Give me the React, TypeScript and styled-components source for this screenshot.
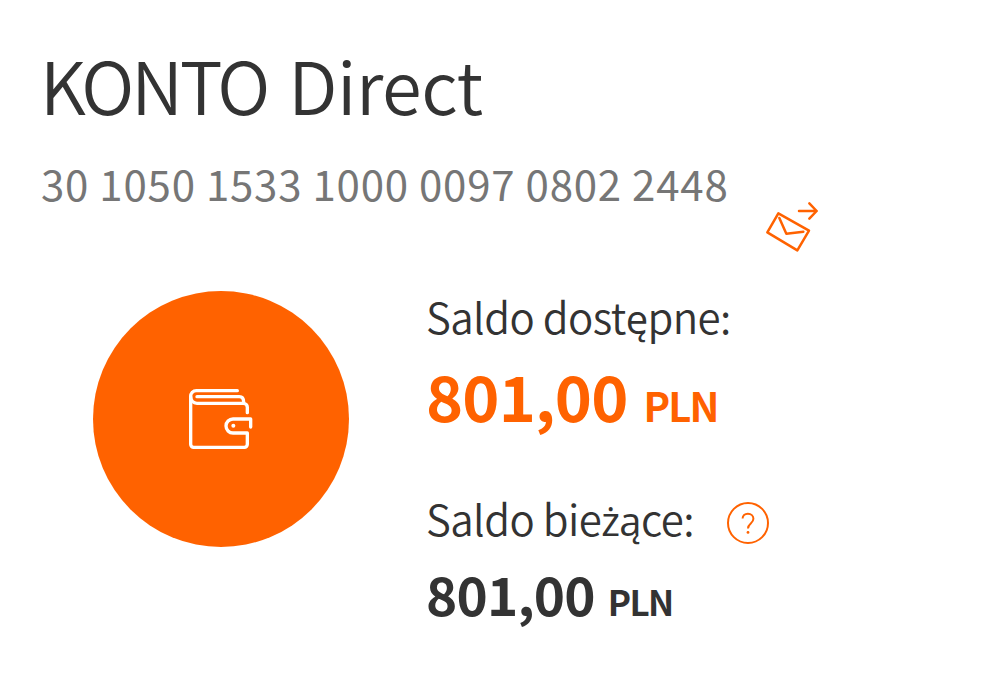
import React from 'react';
import styled, { createGlobalStyle } from 'styled-components';

const GlobalStyle = createGlobalStyle`
  body {
    margin: 0;
    background: #ffffff;
    color: #333333;
    font-family: "Noto Sans CJK SC", "Open Sans", sans-serif;
  }
`;

const Page = styled.main`
  box-sizing: border-box;
  width: 1000px;
  height: 690px;
  padding: 44px 0 0 42px;
  overflow: hidden;
`;

const Title = styled.h1`
  display: flex;
  gap: 21px;
  margin: 0 0 0 -2px;
  font-size: 72px;
  line-height: 80px;
  font-weight: 350;
  letter-spacing: -0.4px;
  white-space: nowrap;
`;

const AccountType = styled.span`
  letter-spacing: -3.2px;
`;

const AccountRow = styled.div`
  display: flex;
  align-items: flex-start;
  height: 99px;
  margin-top: 34px;
`;

const AccountNumber = styled.div`
  width: 708px;
  margin-left: -1px;
  margin-right: 1px;
  color: #767676;
  font-size: 42px;
  line-height: 50px;
  font-weight: 400;
  letter-spacing: 0.78px;
  white-space: nowrap;
`;

const SendIcon = styled.svg`
  width: 80px;
  height: 70px;
  margin-top: 32px;
`;

const Body = styled.div`
  display: flex;
  gap: 77px;
  margin: 34px 0 0 51px;
`;

const Avatar = styled.div`
  display: flex;
  align-items: center;
  justify-content: center;
  width: 256px;
  height: 256px;
  border-radius: 50%;
  background: #ff6200;
`;

const Label = styled.div`
  display: flex;
  align-items: center;
  gap: 32px;
  height: 50px;
  font-size: 42px;
  line-height: 50px;
  font-weight: 350;
  letter-spacing: -0.6px;
  white-space: nowrap;
`;

// Polish letters missing from the light cut of the main family
const Polish = styled.span`
  font-family: "Open Sans", sans-serif;
  font-size: 40px;
  line-height: 1;
  font-weight: 380;
`;

const Balance = styled.section`
  & + & {
    margin-top: 64px;
  }
`;

const Amount = styled.div<{ $primary?: boolean }>`
  display: flex;
  align-items: baseline;
  gap: ${({ $primary }) => ($primary ? 16 : 13)}px;
  height: ${({ $primary }) => ($primary ? 70 : 60)}px;
  margin-top: ${({ $primary }) => ($primary ? 18 : 20)}px;
  color: ${({ $primary }) => ($primary ? '#ff6200' : '#333333')};
  font-size: ${({ $primary }) => ($primary ? 63 : 53)}px;
  line-height: ${({ $primary }) => ($primary ? 72 : 61)}px;
  font-weight: 700;
  letter-spacing: -0.8px;
  white-space: nowrap;
`;

const Currency = styled.span<{ $primary?: boolean }>`
  font-size: ${({ $primary }) => ($primary ? 40 : 35)}px;
  letter-spacing: ${({ $primary }) => ($primary ? -1.9 : -1.7)}px;
`;

const Help = styled.svg`
  width: 44px;
  height: 44px;
  margin-top: 9px;
`;

const WalletIcon = () => (
  <svg width="90" height="90" viewBox="3 -3 270 270" fill="none" stroke="#fff" strokeWidth="10" strokeLinejoin="round" strokeLinecap="round">
    <path d="M187 47H64a17 17 0 0 0-17 18v143a9 9 0 0 0 9 9h152a9 9 0 0 0 9-9v-34h-43a21 21 0 0 1 0-42h53v24" />
    <path d="M47 65a19 19 0 0 0 19 20h139a12 12 0 0 1 12 12v16" />
    <path d="M66 65h127q13 0 13 17" />
    <circle cx="175" cy="152" r="6" fill="#fff" stroke="none" />
  </svg>
);

const HelpIcon = () => (
  <Help viewBox="0 0 44 44" fill="none" stroke="#ff6200" strokeWidth="2">
    <circle cx="22" cy="22" r="20" />
    <path d="M16.6 17.6c0-2.9 2.2-4.9 5.3-4.9 3.2 0 5.5 2.1 5.5 5.1 0 4.7-5.4 4.6-5.4 9.6" />
    <circle cx="22" cy="31.4" r="1.4" fill="#ff6200" stroke="none" />
  </Help>
);

const App = () => {
  return (
    <>
      <GlobalStyle />
      <Page>
        <Title>
          <AccountType>KONTO</AccountType>
          <span>Direct</span>
        </Title>
        <AccountRow>
          <AccountNumber>30 1050 1533 1000 0097 0802 2448</AccountNumber>
          <SendIcon viewBox="0 0 240 210" fill="none" stroke="#ff6200" strokeWidth="7.5" strokeLinejoin="round" strokeLinecap="round">
            <path d="M85 70L177 122 142 181 52 127z" />
            <path d="M88 84L109 131 160 125" />
            <path d="M147 63h53M178 40l22 23-22 23" />
          </SendIcon>
        </AccountRow>
        <Body>
          <Avatar>
            <WalletIcon />
          </Avatar>
          <div>
            <Balance>
              <Label>
                <span>
                  Saldo dost<Polish>ę</Polish>pne:
                </span>
              </Label>
              <Amount $primary>
                <span>801,00</span>
                <Currency $primary>PLN</Currency>
              </Amount>
            </Balance>
            <Balance>
              <Label>
                <span>
                  Saldo bie<Polish>żą</Polish>ce:
                </span>
                <HelpIcon />
              </Label>
              <Amount>
                <span>801,00</span>
                <Currency>PLN</Currency>
              </Amount>
            </Balance>
          </div>
        </Body>
      </Page>
    </>
  );
};

export default App;
